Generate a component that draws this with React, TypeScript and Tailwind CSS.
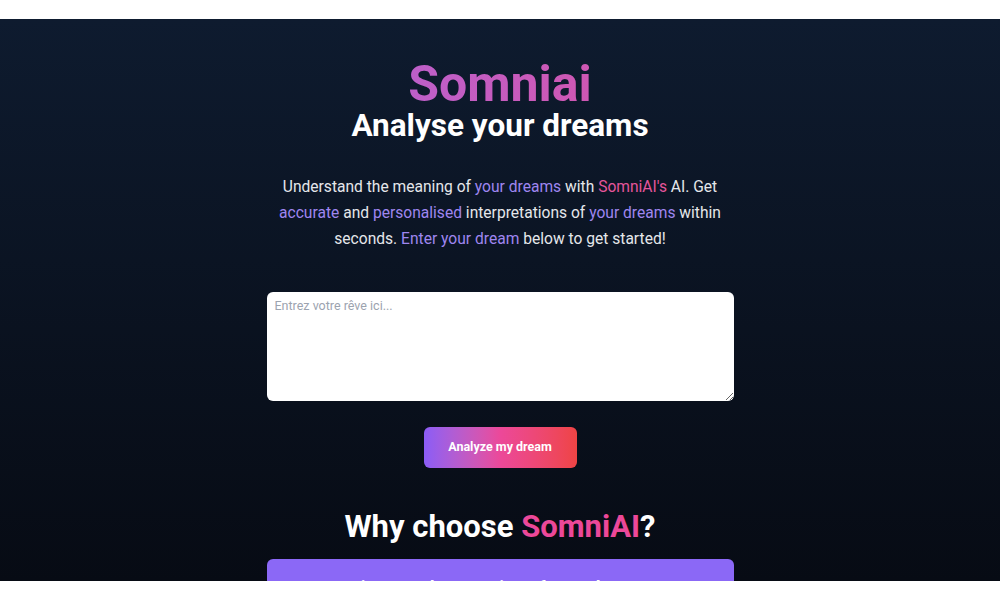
import { useState } from "react";

export default function App() {
  const [dream, setDream] = useState("");

  return (
    <div className="min-h-screen w-full bg-white pt-[19px] pb-[19px]" style={{ fontFamily: "Roboto, 'Liberation Sans', sans-serif" }}>
      <div className="h-[562px] overflow-hidden bg-gradient-to-b from-[#0e1b2f] to-[#070b14] text-white">
        <div className="mx-auto flex w-[467px] flex-col items-center pt-[39px]">
          <h1 className="bg-gradient-to-r from-[#bd5fc9] to-[#cf57b3] bg-clip-text text-[50px] font-bold leading-[52px] text-transparent">
            Somniai
          </h1>
          <h2 className="text-[31.5px] font-bold leading-[32px]">Analyse your dreams</h2>

          <p className="mt-[32px] w-[448px] text-center text-[15.6px] leading-[26px] text-[#e5e7eb]">
            Understand the meaning of <span className="text-[#9f86f0]">your dreams</span> with{" "}
            <span className="text-[#e5559b]">SomniAI's</span> AI. Get <span className="text-[#9f86f0]">accurate</span> and{" "}
            <span className="text-[#9f86f0]">personalised</span> interpretations of{" "}
            <span className="text-[#9f86f0]">your dreams</span> within seconds.{" "}
            <span className="text-[#9f86f0]">Enter your dream</span> below to get started!
          </p>

          <textarea
            value={dream}
            onChange={(e) => setDream(e.target.value)}
            placeholder="Entrez votre rêve ici..."
            className="mt-[40px] h-[109px] w-full resize-y rounded-md bg-white px-[8px] py-[5px] text-[12.5px] text-gray-900 placeholder:text-[#9ca3af] focus:outline-none"
          />

          <button className="mt-[26px] h-[41px] w-[153px] rounded-md bg-gradient-to-r from-[#8b5cf6] via-[#ec4899] to-[#ef4444] text-[12.5px] font-bold text-white">
            Analyze my dream
          </button>

          <h2 className="mt-[41px] text-[31px] font-bold leading-[36px]">
            Why choose <span className="text-[#ec4899]">SomniAI</span>?
          </h2>

          <div className="mt-[14px] w-full rounded-md bg-[#8b68f6] px-6 pt-[17px] pb-4 text-center">
            <p className="text-[18px] font-bold leading-[24px] text-white">Discover the meaning of your dreams</p>
          </div>
        </div>
      </div>
    </div>
  );
}
